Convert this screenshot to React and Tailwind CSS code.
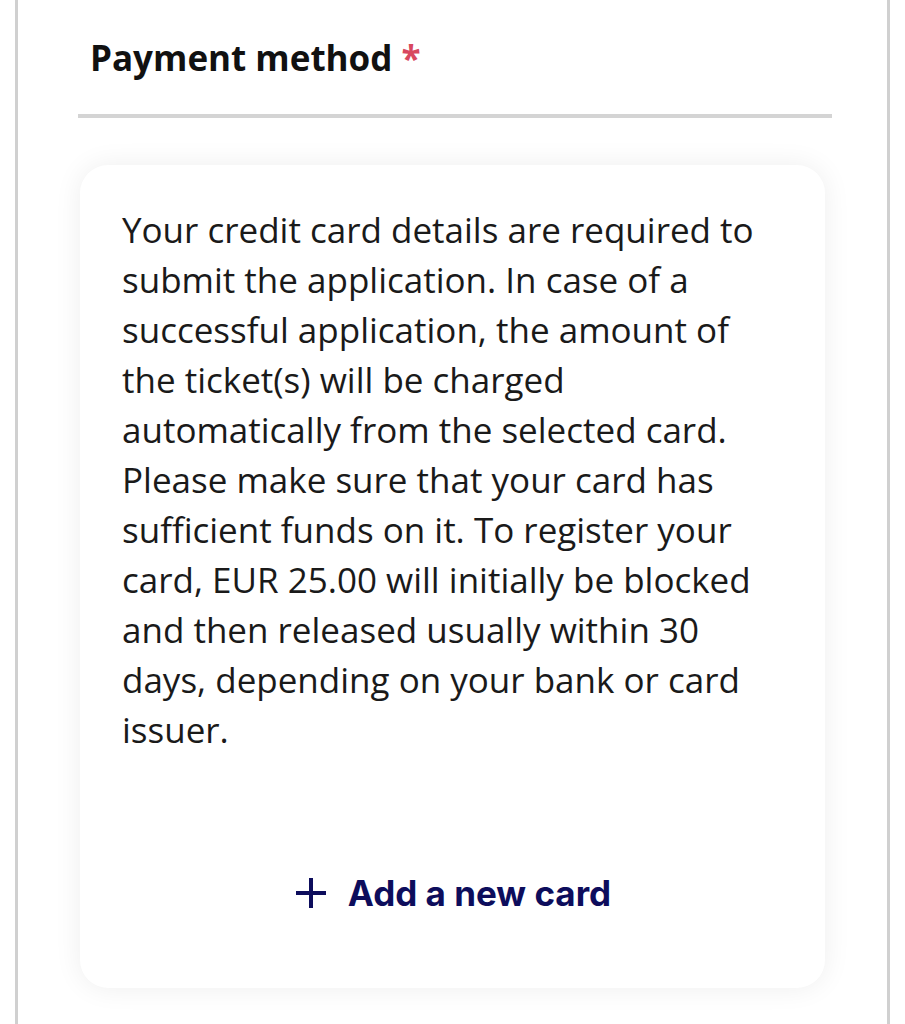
const noticeText =
  "Your credit card details are required to submit the application. In case of a successful application, the amount of the ticket(s) will be charged automatically from the selected card. Please make sure that your card has sufficient funds on it. To register your card, EUR 25.00 will initially be blocked and then released usually within 30 days, depending on your bank or card issuer.";

function PlusIcon() {
  return (
    <svg width="30" height="30" viewBox="0 0 30 30" fill="none" stroke="currentColor" strokeWidth="4">
      <line x1="15" y1="0" x2="15" y2="30" />
      <line x1="0" y1="15" x2="30" y2="15" />
    </svg>
  );
}

export default function App() {
  return (
    <div className="min-h-screen bg-white px-[15px] font-['Open_Sans',sans-serif]">
      <div className="min-h-screen border-x-[3px] border-[#d0d0d0]">
        <div className="ml-[60px] w-[754px] pt-[34px]">
          {/* Section title */}
          <div className="pl-[12px] pb-[32px]">
            <h2 className="text-[35px] leading-[48px] font-bold text-[#111]">
              Payment method <span className="text-[#d8485f]">*</span>
            </h2>
          </div>
          <div className="h-[4px] bg-[#d4d4d4]" />

          {/* Card panel */}
          <div className="mt-[47px] ml-[2px] w-[745px] rounded-[28px] bg-white shadow-[0_0_28px_rgba(0,0,0,0.07)] pl-[42px] pr-[40px] pt-[40px] pb-[70px]">
            <p className="text-[35px] leading-[50px] text-[#1a1a1a]">
              {noticeText}
            </p>
            <button className="mt-[113px] flex h-[50px] w-full items-center justify-center gap-[22px] text-[#0d0d5c]">
              <PlusIcon />
              <span className="font-['Inter',sans-serif] text-[35px] font-bold">
                Add a new card
              </span>
            </button>
          </div>
        </div>
      </div>
    </div>
  );
}
